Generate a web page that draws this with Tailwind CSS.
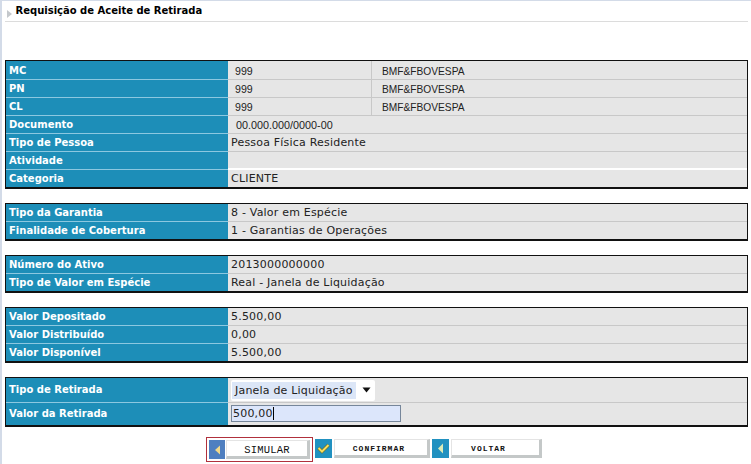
<!DOCTYPE html>
<html><head><meta charset="utf-8"><script src="https://cdn.jsdelivr.net/npm/@tailwindcss/browser@4"></script></head>
<body class="bg-white">
<div class="w-[751px] h-[464px] overflow-hidden relative font-['DejaVu_Sans',sans-serif] text-[11px] tracking-[0.2px] text-[#222] border-t border-l-2 border-[#d3dbe8] pl-[3px] pr-[3px]">
  <div class="h-[21px] flex items-center border-b border-[#dcdcdc] mb-[38px]">
    <svg width="10" height="12" viewBox="0 0 10 12" class="ml-px mt-[5px]"><path d="M1 2 L6 6 L1 10Z" fill="#c4c8cc"/></svg>
    <span class="ml-[-0.5px] font-bold text-black text-[10px] tracking-normal mt-[-1px]">Requisição de Aceite de Retirada</span>
  </div>

  <div class="border border-b-2 border-[#111] mb-[14px]">
    <div class="flex h-[19px]"><div class="w-[222px] bg-[#1d8eb8] text-white font-bold text-[10px] tracking-normal pl-[3px] leading-[19px] border-b border-[#8cc8e0]">MC</div><div class="w-[144px] pl-[7px] bg-[#e6e6e6] border-b border-r border-[#c8c8c8] font-['Liberation_Sans',sans-serif] text-[10.6px] tracking-normal leading-[21px]">999</div><div class="flex-1 pl-[10px] bg-[#e6e6e6] border-b border-[#c8c8c8] font-['Liberation_Sans',sans-serif] text-[10.2px] tracking-normal leading-[22px]">BMF&amp;FBOVESPA</div></div>
    <div class="flex h-[18px]"><div class="w-[222px] bg-[#1d8eb8] text-white font-bold text-[10px] tracking-normal pl-[3px] leading-[18px] border-b border-[#8cc8e0]">PN</div><div class="w-[144px] pl-[7px] bg-[#e6e6e6] border-b border-r border-[#c8c8c8] font-['Liberation_Sans',sans-serif] text-[10.6px] tracking-normal leading-[19px]">999</div><div class="flex-1 pl-[10px] bg-[#e6e6e6] border-b border-[#c8c8c8] font-['Liberation_Sans',sans-serif] text-[10.2px] tracking-normal leading-[19px]">BMF&amp;FBOVESPA</div></div>
    <div class="flex h-[18px]"><div class="w-[222px] bg-[#1d8eb8] text-white font-bold text-[10px] tracking-normal pl-[3px] leading-[18px] border-b border-[#8cc8e0]">CL</div><div class="w-[144px] pl-[7px] bg-[#e6e6e6] border-b border-r border-[#c8c8c8] font-['Liberation_Sans',sans-serif] text-[10.6px] tracking-normal leading-[19px]">999</div><div class="flex-1 pl-[10px] bg-[#e6e6e6] border-b border-[#c8c8c8] font-['Liberation_Sans',sans-serif] text-[10.2px] tracking-normal leading-[19px]">BMF&amp;FBOVESPA</div></div>
    <div class="flex h-[18px]"><div class="w-[222px] bg-[#1d8eb8] text-white font-bold text-[10px] tracking-normal pl-[3px] leading-[18px] border-b border-[#8cc8e0]">Documento</div><div class="flex-1 pl-[8px] bg-[#e6e6e6] border-b border-[#c8c8c8] font-['Liberation_Sans',sans-serif] text-[10.8px] tracking-normal leading-[19px]">00.000.000/0000-00</div></div>
    <div class="flex h-[18px]"><div class="w-[222px] bg-[#1d8eb8] text-white font-bold text-[10px] tracking-normal pl-[3px] leading-[18px] border-b border-[#8cc8e0]">Tipo de Pessoa</div><div class="flex-1 pl-[3px] bg-[#e6e6e6] border-b border-[#c8c8c8] leading-[17px]">Pessoa Física Residente</div></div>
    <div class="flex h-[18px]"><div class="w-[222px] bg-[#1d8eb8] text-white font-bold text-[10px] tracking-normal pl-[3px] leading-[18px] border-b border-[#8cc8e0]">Atividade</div><div class="flex-1 pl-[3px] bg-[#e6e6e6] border-b-2 border-white leading-[17px]"></div></div>
    <div class="flex h-[17px]"><div class="w-[222px] bg-[#1d8eb8] text-white font-bold text-[10px] tracking-normal pl-[3px] leading-[18px]">Categoria</div><div class="flex-1 pl-[3px] bg-[#e6e6e6] leading-[17px]">CLIENTE</div></div>
  </div>

  <div class="border border-b-2 border-[#111] mb-[14px]">
    <div class="flex h-[18px]"><div class="w-[222px] bg-[#1d8eb8] text-white font-bold text-[10px] tracking-normal pl-[3px] leading-[18px] border-b border-[#8cc8e0]">Tipo da Garantia</div><div class="flex-1 pl-[3px] bg-[#e6e6e6] border-b border-[#c8c8c8] leading-[17px]">8 - Valor em Espécie</div></div>
    <div class="flex h-[17px]"><div class="w-[222px] bg-[#1d8eb8] text-white font-bold text-[10px] tracking-normal pl-[3px] leading-[18px]">Finalidade de Cobertura</div><div class="flex-1 pl-[3px] bg-[#e6e6e6] leading-[17px]">1 - Garantias de Operações</div></div>
  </div>

  <div class="border border-b-2 border-[#111] mb-[14px]">
    <div class="flex h-[18px]"><div class="w-[222px] bg-[#1d8eb8] text-white font-bold text-[10px] tracking-normal pl-[3px] leading-[18px] border-b border-[#8cc8e0]">Número do Ativo</div><div class="flex-1 pl-[3px] bg-[#e6e6e6] border-b border-[#c8c8c8] leading-[17px]">2013000000000</div></div>
    <div class="flex h-[17px]"><div class="w-[222px] bg-[#1d8eb8] text-white font-bold text-[10px] tracking-normal pl-[3px] leading-[18px]">Tipo de Valor em Espécie</div><div class="flex-1 pl-[3px] bg-[#e6e6e6] leading-[17px]">Real - Janela de Liquidação</div></div>
  </div>

  <div class="border border-b-2 border-[#111] mb-[14px]">
    <div class="flex h-[18px]"><div class="w-[222px] bg-[#1d8eb8] text-white font-bold text-[10px] tracking-normal pl-[3px] leading-[18px] border-b border-[#8cc8e0]">Valor Depositado</div><div class="flex-1 pl-[3px] bg-[#e6e6e6] border-b border-[#c8c8c8] leading-[17px]">5.500,00</div></div>
    <div class="flex h-[18px]"><div class="w-[222px] bg-[#1d8eb8] text-white font-bold text-[10px] tracking-normal pl-[3px] leading-[18px] border-b border-[#8cc8e0]">Valor Distribuído</div><div class="flex-1 pl-[3px] bg-[#e6e6e6] border-b border-[#c8c8c8] leading-[17px]">0,00</div></div>
    <div class="flex h-[17px]"><div class="w-[222px] bg-[#1d8eb8] text-white font-bold text-[10px] tracking-normal pl-[3px] leading-[18px]">Valor Disponível</div><div class="flex-1 pl-[3px] bg-[#e6e6e6] leading-[17px]">5.500,00</div></div>
  </div>

  <div class="border border-b-2 border-[#111] mb-[11px]">
    <div class="flex h-[25px]"><div class="w-[222px] bg-[#1d8eb8] text-white font-bold text-[10px] tracking-normal pl-[3px] leading-[24px] border-b border-[#8cc8e0]">Tipo de Retirada</div><div class="flex-1 pl-[3px] bg-[#e6e6e6] border-b border-[#c8c8c8] flex items-center"><div class="w-[144px] h-[21px] bg-white flex items-center pl-[1px] rounded-[2px]"><span class="bg-[#dce6f7] pl-[3px] pr-[3px] leading-[17px] tracking-[0.2px]">Janela de Liquidação</span><svg width="9" height="6" viewBox="0 0 9 6" class="ml-[6px]"><path d="M0.5 0.5H8.5L4.5 5.5Z" fill="#111"/></svg></div></div></div>
    <div class="flex h-[22px]"><div class="w-[222px] bg-[#1d8eb8] text-white font-bold text-[10px] tracking-normal pl-[3px] leading-[22px]">Valor da Retirada</div><div class="flex-1 pl-[3px] bg-[#e6e6e6] pt-[2px]"><div class="w-[170px] h-[17px] bg-[#dce6fb] border border-[#76869a] pl-[1px] leading-[15px] flex items-center text-[#222]">500,00<span class="w-px h-[13px] bg-black"></span></div></div></div>
  </div>

  <div class="flex justify-center gap-[2px] ml-[-5px] tracking-normal">
    <div class="border border-[#b0303c] p-[2px] w-[107px] h-[25px] flex mt-[-1px]"><div class="w-[16px] h-[19px] bg-[#4f7fc0] flex items-center justify-center"><svg width="7" height="10" viewBox="0 0 7 10"><path d="M6 0.5V9.5L1 5Z" fill="#f2d98a"/></svg></div><div class="flex-1 ml-px h-[19px] bg-white border border-r-[3px] border-b-[3px] border-t-[#e4e4e4] border-l-[#e4e4e4] border-r-[#c4c8c8] border-b-[#c4c8c8] text-center leading-[18px] font-['Liberation_Mono',monospace] text-[10.5px] tracking-[0.2px] text-[#111]">SIMULAR</div></div>
    <div class="w-[115px] h-[20px] flex mt-[1px]"><div class="w-[17px] h-[19px] bg-[#2191c0] flex items-center justify-center"><svg width="13" height="11" viewBox="0 0 13 11"><path d="M1.5 5L5 8.5L11.5 2" fill="none" stroke="#6b6b20" stroke-width="3.2"/><path d="M1.5 5L5 8.5L11.5 2" fill="none" stroke="#f6dd60" stroke-width="2"/></svg></div><div class="w-[97px] ml-[2px] h-[19px] bg-white border border-r-[3px] border-b-[3px] border-t-[#e4e4e4] border-l-[#e4e4e4] border-r-[#c4c8c8] border-b-[#c4c8c8] text-center leading-[18px] pr-[4px] font-['Liberation_Mono',monospace] font-bold text-[8px] tracking-[1px] text-[#111]">CONFIRMAR</div></div>
    <div class="w-[110px] h-[20px] flex mt-[1px]"><div class="w-[17px] h-[19px] bg-[#2191c0] flex items-center justify-center"><svg width="7" height="11" viewBox="0 0 7 11"><path d="M6 0.5V10.5L1 5.5Z" fill="#dcebb8"/></svg></div><div class="flex-1 ml-[2px] h-[19px] bg-white border border-r-[3px] border-b-[3px] border-t-[#e4e4e4] border-l-[#e4e4e4] border-r-[#c4c8c8] border-b-[#c4c8c8] text-center leading-[18px] pr-[14px] font-['Liberation_Mono',monospace] font-bold text-[8px] tracking-[1px] text-[#111]">VOLTAR</div></div>
  </div>
</div>
</body></html>
